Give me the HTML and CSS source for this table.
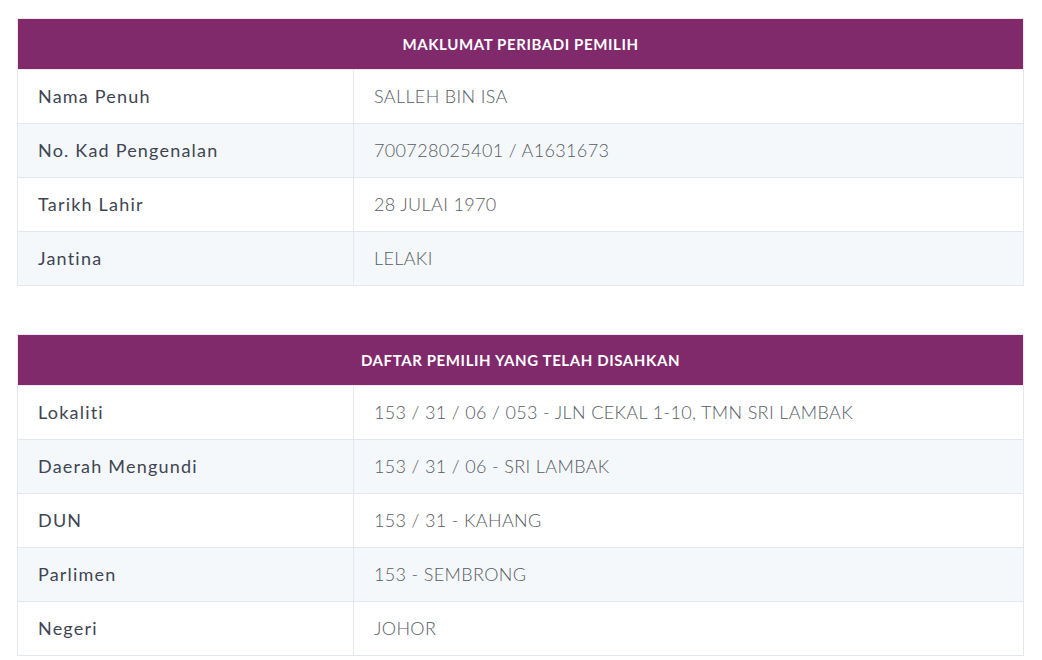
FILE: index.html
```html
<!DOCTYPE html>
<html>
<head>
<meta charset="utf-8">
<link rel="stylesheet" href="styles.css">
</head>
<body>
<div class="page">
  <table class="info">
    <thead>
      <tr><th colspan="2">MAKLUMAT PERIBADI PEMILIH</th></tr>
    </thead>
    <tbody>
      <tr><td class="label">Nama Penuh</td><td class="value">SALLEH BIN ISA</td></tr>
      <tr><td class="label">No. Kad Pengenalan</td><td class="value">700728025401 / A1631673</td></tr>
      <tr><td class="label">Tarikh Lahir</td><td class="value">28 JULAI 1970</td></tr>
      <tr><td class="label">Jantina</td><td class="value">LELAKI</td></tr>
    </tbody>
  </table>
  <table class="info">
    <thead>
      <tr><th colspan="2">DAFTAR PEMILIH YANG TELAH DISAHKAN</th></tr>
    </thead>
    <tbody>
      <tr><td class="label">Lokaliti</td><td class="value">153 / 31 / 06 / 053 - JLN CEKAL 1-10, TMN SRI LAMBAK</td></tr>
      <tr><td class="label">Daerah Mengundi</td><td class="value">153 / 31 / 06 - SRI LAMBAK</td></tr>
      <tr><td class="label">DUN</td><td class="value">153 / 31 - KAHANG</td></tr>
      <tr><td class="label">Parlimen</td><td class="value">153 - SEMBRONG</td></tr>
      <tr><td class="label">Negeri</td><td class="value">JOHOR</td></tr>
    </tbody>
  </table>
</div>
</body>
</html>
```
FILE: styles.css
```css
html, body {
  margin: 0;
  padding: 0;
  background: #ffffff;
}
.page {
  padding: 18px 18px 0 17px;
  display: flex;
  flex-direction: column;
  gap: 48px;
  font-family: "Lato", "Open Sans", sans-serif;
}
.info {
  width: 1007px;
  border-collapse: collapse;
  border: 1px solid #e3e8ee;
}
.info th {
  background: #802a6c;
  color: #ffffff;
  font-weight: 700;
  font-size: 15px;
  letter-spacing: 0.6px;
  height: 50px;
  padding: 0;
  text-align: center;
  border: 1px solid #f0e6f0;
}
.info td {
  height: 51px;
  padding: 0 20px 2px;
  font-size: 18px;
  border: 1px solid #e3e8ee;
  vertical-align: middle;
}
.info tbody tr:nth-child(even) td {
  background: #f5f8fb;
}
.label {
  width: 295px;
  color: #3e4552;
  font-weight: 400;
  letter-spacing: 1.2px;
}
.value {
  color: #575c64;
  font-weight: 300;
  letter-spacing: 0.35px;
}
```
